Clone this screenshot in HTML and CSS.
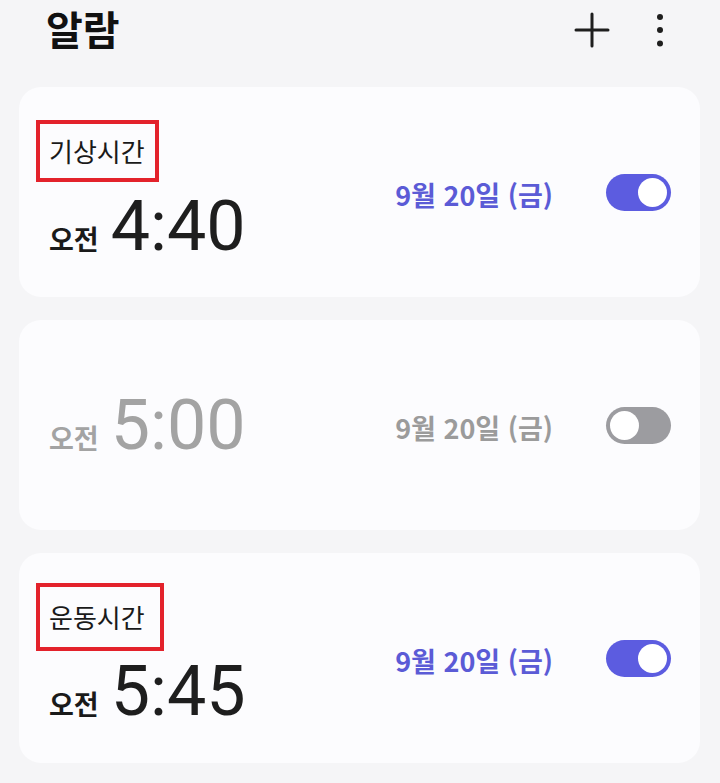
FILE: index.html
```html
<!DOCTYPE html>
<html lang="ko">
<head>
<meta charset="utf-8">
<title>알람</title>
<link rel="stylesheet" href="styles.css">
</head>
<body>
<div class="app">
  <header class="top">
    <h1 class="title">알람</h1>
    <div class="actions">
      <svg class="icon plus" width="36" height="36" viewBox="0 0 36 36"><path d="M18 2V34M2 18H34" stroke="#1e1e1e" stroke-width="3" stroke-linecap="round" fill="none"/></svg>
      <svg class="icon more" width="12" height="36" viewBox="0 0 12 36"><circle cx="6" cy="5" r="3" fill="#1e1e1e"/><circle cx="6" cy="18" r="3" fill="#1e1e1e"/><circle cx="6" cy="31.5" r="3" fill="#1e1e1e"/></svg>
    </div>
  </header>
  <main class="list">
    <section class="card">
      <div class="left">
        <div class="label">기상시간</div>
        <div class="time"><span class="ampm">오전</span><span class="clock">4:40</span></div>
      </div>
      <div class="right">
        <span class="date">9월 20일 (금)</span>
        <span class="toggle on"><span class="knob"></span></span>
      </div>
    </section>
    <section class="card off">
      <div class="left">
        <div class="time"><span class="ampm">오전</span><span class="clock">5:00</span></div>
      </div>
      <div class="right">
        <span class="date">9월 20일 (금)</span>
        <span class="toggle"><span class="knob"></span></span>
      </div>
    </section>
    <section class="card">
      <div class="left wide-left">
        <div class="label wide">운동시간</div>
        <div class="time"><span class="ampm">오전</span><span class="clock">5:45</span></div>
      </div>
      <div class="right">
        <span class="date">9월 20일 (금)</span>
        <span class="toggle on"><span class="knob"></span></span>
      </div>
    </section>
  </main>
</div>
</body>
</html>
```
FILE: styles.css
```css
html, body {
  margin: 0;
  padding: 0;
  background: #f5f5f7;
}
body {
  font-family: "Noto Sans CJK KR", "Noto Sans", sans-serif;
  color: #1e1e1e;
  width: 720px;
  height: 783px;
  overflow: hidden;
}
.app {
  padding: 0 20px 0 19px;
}
.top {
  display: flex;
  align-items: center;
  justify-content: space-between;
  height: 60px;
  margin-bottom: 27px;
}
.title {
  margin: 0 0 4px 27px;
  font-size: 40px;
  font-weight: 700;
  line-height: 1;
  color: #111;
}
.actions {
  display: flex;
  align-items: center;
  gap: 44px;
  margin-right: 34px;
}
.icon { display: block; }
.list {
  display: flex;
  flex-direction: column;
  gap: 23px;
}
.card {
  background: #fcfcfe;
  border-radius: 22px;
  height: 210px;
  box-sizing: border-box;
  display: flex;
  align-items: center;
  justify-content: space-between;
  padding: 0 29px 0 17px;
}
.left {
  display: flex;
  flex-direction: column;
  align-items: flex-start;
  padding-bottom: 4px;
}
.wide-left {
  padding-bottom: 8px;
}
.label {
  border: 4px solid #e3222b;
  padding: 12px 10px 12px 9px;
  font-size: 26px;
  font-weight: 400;
  line-height: 30px;
  color: #1a1a1a;
  margin-bottom: 9px;
}
.label.wide {
  padding: 15px 15px 15px 9px;
  margin-bottom: 5px;
}
.time {
  display: flex;
  align-items: baseline;
  padding-left: 13px;
  gap: 12px;
}
.ampm {
  font-size: 27px;
  font-weight: 700;
  color: #1a1a1a;
}
.clock {
  font-family: Roboto, "Liberation Sans", sans-serif;
  font-size: 70px;
  font-weight: 400;
  line-height: 1;
  color: #1e1e1e;
}
.right {
  display: flex;
  align-items: center;
  gap: 53px;
}
.date {
  font-size: 27px;
  font-weight: 700;
  color: #5b5bd6;
  margin-top: 4px;
}
.toggle {
  width: 65px;
  height: 37px;
  border-radius: 19px;
  background: #9c9ca0;
  display: flex;
  align-items: center;
  padding: 0 4px;
  box-sizing: border-box;
  justify-content: flex-start;
}
.toggle.on {
  background: #5c5ce0;
  justify-content: flex-end;
}
.knob {
  width: 29px;
  height: 29px;
  border-radius: 50%;
  background: #ffffff;
}
.card.off .ampm,
.card.off .clock {
  color: #a3a3a3;
}
.card.off .date {
  color: #9b9b9b;
}
.card.off .left { padding-bottom: 0; }
```
